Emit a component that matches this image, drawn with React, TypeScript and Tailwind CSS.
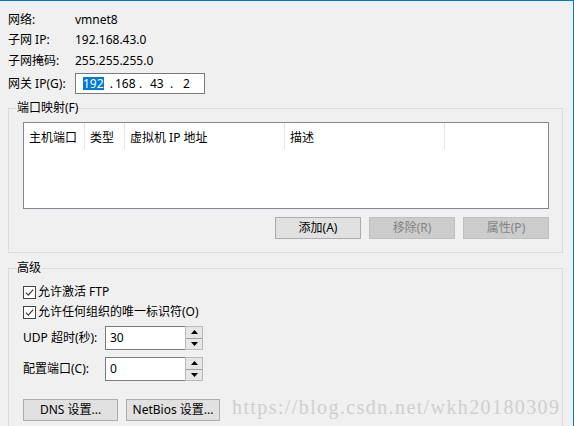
import React from 'react'

const font = "font-['Noto_Sans','Noto_Sans_CJK_SC',sans-serif]"

function Check() {
  return (
    <span className="w-[13px] h-[13px] border border-[#444444] bg-white flex items-center justify-center shrink-0">
      <svg width="11" height="11" viewBox="0 0 11 11">
        <path d="M1.8 5.6 L4.3 8.1 L9.2 2.6" fill="none" stroke="#333333" strokeWidth="1.1" />
      </svg>
    </span>
  )
}

function Spin({ value }: { value: string }) {
  return (
    <div className="flex h-[24px] w-[98px]">
      <div className="flex-1 border border-[#7a7a7a] border-r-0 bg-white pl-[4px] flex items-center leading-none">
        {value}
      </div>
      <div className="w-[18px] border border-[#b9b9b9] bg-[#e6e6e6] flex flex-col">
        <div className="flex-1 flex items-center justify-center border-b border-[#a0a0a0]">
          <svg width="7" height="4" viewBox="0 0 7 4">
            <polygon points="3.5,0 7,4 0,4" fill="#000" />
          </svg>
        </div>
        <div className="flex-1 flex items-center justify-center">
          <svg width="7" height="4" viewBox="0 0 7 4">
            <polygon points="0,0 7,0 3.5,4" fill="#000" />
          </svg>
        </div>
      </div>
    </div>
  )
}

function Btn({ label, w, disabled }: { label: string; w: string; disabled?: boolean }) {
  return (
    <div
      className={`${w} h-[22px] border flex items-center justify-center leading-none ${
        disabled ? 'bg-[#cccccc] border-[#bfbfbf] text-[#838383]' : 'bg-[#e1e1e1] border-[#adadad] text-black'
      }`}
    >
      {label}
    </div>
  )
}

export default function App() {
  // 上方信息行
  const rows = [
    ['网络:', 'vmnet8'],
    ['子网 IP:', '192.168.43.0'],
    ['子网掩码:', '255.255.255.0'],
  ]

  return (
    <div
      className={`relative w-[574px] h-[426px] overflow-hidden bg-[#f0f0f0] border-t border-r border-[#0078d7] pl-[8px] pt-[9px] text-[12px] text-black ${font}`}
    >
      {rows.map(([k, v], i) => (
        <div key={k} className={`flex items-center ${i === 2 ? 'h-[21px]' : 'h-[20px]'}`}>
          <span className="w-[67px]">{k}</span>
          <span>{v}</span>
        </div>
      ))}
      <div className="flex items-center h-[21px] mt-[2px]">
        <span className="w-[67px] pt-[1px]">网关 IP(G):</span>
        <div className="w-[130px] h-[21px] border border-[#7a7a7a] bg-white flex items-center pl-[7px] leading-none">
          <span className="w-[21px] bg-[#0078d7] text-white h-[13px] flex items-center">192</span>
          <span className="w-[11px] text-right pr-[2px]">.</span>
          <span className="w-[24px]">168</span>
          <span className="w-[11px]">.</span>
          <span className="w-[20px]">43</span>
          <span className="w-[13px]">.</span>
          <span>2</span>
        </div>
      </div>

      {/* 端口映射 */}
      <div className="relative mt-[14px] w-[555px] h-[145px] border border-[#dcdcdc]">
        <span className="absolute left-[7px] -top-[9px] bg-[#f0f0f0] px-[1px] leading-[16px]">端口映射(F)</span>
        <div className="ml-[14px] mt-[13px] w-[526px] h-[87px] border border-[#828790] bg-white">
          <div className="flex h-[26px]">
            {[
              ['主机端口', 'w-[61px]'],
              ['类型', 'w-[40px]'],
              ['虚拟机 IP 地址', 'w-[160px]'],
              ['描述', 'w-[160px]'],
            ].map(([t, w]) => (
              <div key={t} className={`${w} border-r border-[#e5e5e5] pl-[5px] pt-[3px] flex items-center`}>
                {t}
              </div>
            ))}
          </div>
        </div>
        <div className="ml-[14px] mt-[8px] w-[526px] flex justify-end gap-[8px]">
          <Btn label="添加(A)" w="w-[86px]" />
          <Btn label="移除(R)" w="w-[86px]" disabled />
          <Btn label="属性(P)" w="w-[86px]" disabled />
        </div>
      </div>

      {/* 高级 */}
      <div className="relative mt-[15px] w-[555px] h-[200px] border border-[#dcdcdc] pl-[14px]">
        <span className="absolute left-[7px] -top-[9px] bg-[#f0f0f0] px-[1px] leading-[16px]">高级</span>
        <div className="mt-[15px] h-[16px] flex items-center gap-[2px]">
          <Check />
          <span>允许激活 FTP</span>
        </div>
        <div className="mt-[4px] h-[16px] flex items-center gap-[2px]">
          <Check />
          <span>允许任何组织的唯一标识符(O)</span>
        </div>
        <div className="mt-[6px] flex items-center">
          <span className="w-[82px]">UDP 超时(秒):</span>
          <Spin value="30" />
        </div>
        <div className="mt-[7px] flex items-center">
          <span className="w-[82px]">配置端口(C):</span>
          <Spin value="0" />
        </div>
        <div className="mt-[18px] flex gap-[8px]">
          <Btn label="DNS 设置..." w="w-[95px]" />
          <Btn label="NetBios 设置..." w="w-[94px]" />
        </div>
      </div>

      {/* 水印 */}
      <div className="absolute left-[232px] top-[396px] text-[20px] leading-[20px] tracking-[1.4px] text-[#cfcfcf] font-['Liberation_Serif',serif] whitespace-nowrap">
        https://blog.csdn.net/wkh20180309
      </div>
    </div>
  )
}
